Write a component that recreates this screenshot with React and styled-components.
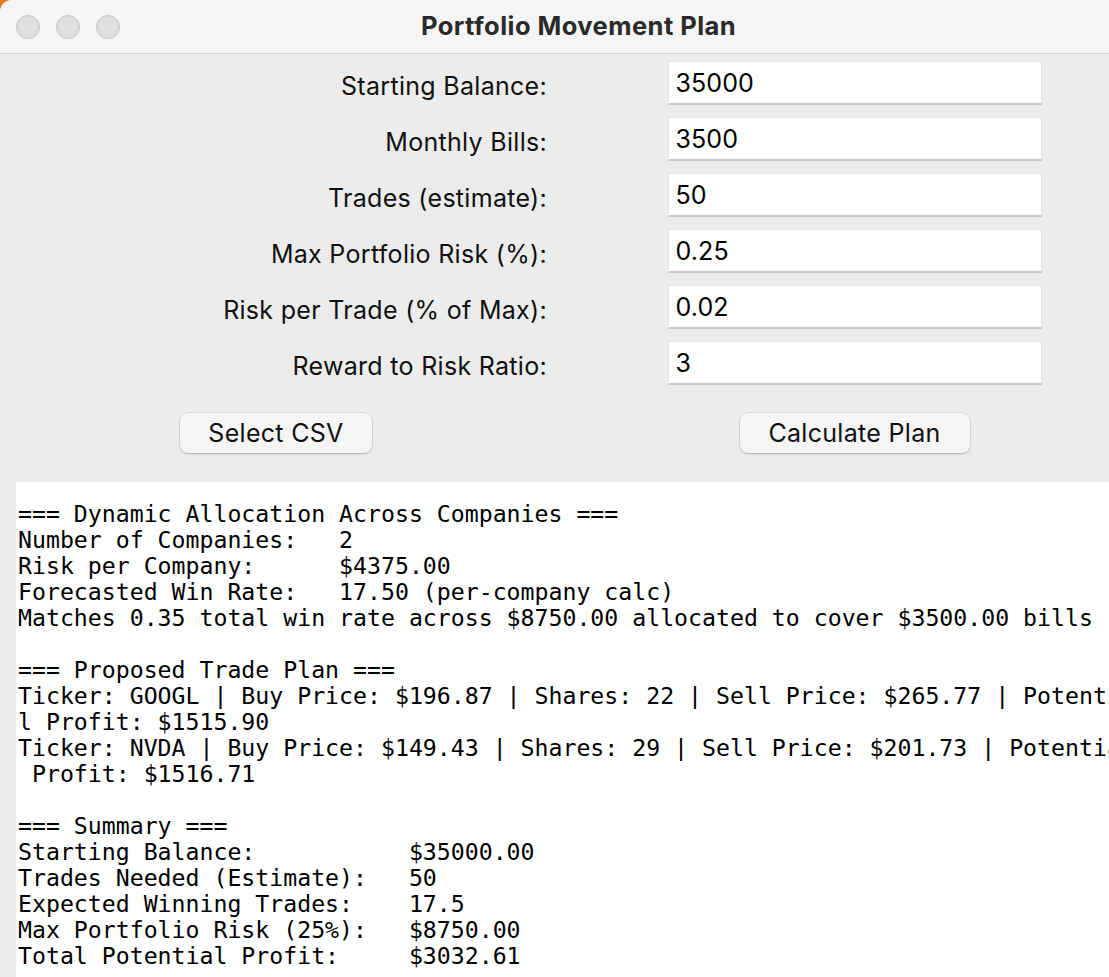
import React from "react";
import styled, { createGlobalStyle } from "styled-components";

const Global = createGlobalStyle`
  html, body {
    margin: 0;
    padding: 0;
    overflow: hidden;
    background: #e07b22;
  }
  #root { width: 1109px; height: 977px; overflow: hidden; }
`;

const Window = styled.div`
  width: 1157px;
  height: 977px;
  background: #ececec;
  border-top-left-radius: 12px;
  overflow: hidden;
  display: flex;
  flex-direction: column;
  font-family: Inter, "Liberation Sans", sans-serif;
  color: #000;
`;

const TitleBar = styled.div`
  height: 53px;
  flex: none;
  background: #f5f5f5;
  border-bottom: 1px solid #d6d6d6;
  display: grid;
  grid-template-columns: 1fr auto 1fr;
  align-items: center;
  padding: 0 16px;
`;

const Lights = styled.div`
  display: flex;
  gap: 16px;
  padding-top: 1px;
`;

const Light = styled.span`
  width: 22px;
  height: 22px;
  border-radius: 50%;
  background: #dedede;
  border: 1px solid #c4c4c4;
`;

const Title = styled.div`
  font-size: 25.5px;
  font-weight: 700;
  color: #2a2a2a;
  letter-spacing: 0.45px;
  padding-bottom: 2px;
`;

const Form = styled.div`
  display: grid;
  grid-template-columns: 552px 605px;
  grid-auto-rows: 44px;
  row-gap: 12px;
  padding-top: 7px;
  align-items: center;
`;

const Label = styled.label`
  justify-self: end;
  padding-right: 5px;
  padding-top: 5px;
  font-size: 25px;
  line-height: 30px;
  letter-spacing: 0.3px;
  color: #111;
`;

const Input = styled.input`
  justify-self: center;
  box-sizing: border-box;
  width: 374px;
  height: 44px;
  border: 1px solid #e2e2e2;
  border-bottom: 2px solid #c8c8c8;
  background: #fff;
  font-family: Inter, "Liberation Sans", sans-serif;
  font-size: 25px;
  letter-spacing: 0.1px;
  padding: 1px 7px 0;
  color: #000;
  outline: none;
`;

const ButtonRow = styled.div`
  display: grid;
  grid-template-columns: 552px 605px;
  padding-top: 28px;
  padding-bottom: 29px;
`;

const Button = styled.button`
  justify-self: center;
  width: ${(p) => p.$w}px;
  height: 40px;
  border: none;
  border-radius: 8px;
  background: #f5f5f5;
  box-shadow: 0 0 0 0.5px rgba(0, 0, 0, 0.12), 0 1px 2px rgba(0, 0, 0, 0.2);
  font-family: Inter, "Liberation Sans", sans-serif;
  font-size: 25px;
  letter-spacing: 0.3px;
  color: #111;
  padding: 0;
`;

const Output = styled.pre`
  flex: 1;
  margin: 0 0 0 16px;
  background: #fff;
  padding: 19px 2px 0 2px;
  font-family: "DejaVu Sans Mono", "Liberation Mono", monospace;
  font-size: 23.2px;
  line-height: 26px;
  white-space: pre;
  color: #000;
  overflow: hidden;
`;

const fields = [
  ["Starting Balance:", "35000"],
  ["Monthly Bills:", "3500"],
  ["Trades (estimate):", "50"],
  ["Max Portfolio Risk (%):", "0.25"],
  ["Risk per Trade (% of Max):", "0.02"],
  ["Reward to Risk Ratio:", "3"],
];

const lines = [
  "=== Dynamic Allocation Across Companies ===",
  "Number of Companies:   2",
  "Risk per Company:      $4375.00",
  "Forecasted Win Rate:   17.50 (per-company calc)",
  "Matches 0.35 total win rate across $8750.00 allocated to cover $3500.00 bills",
  "",
  "=== Proposed Trade Plan ===",
  "Ticker: GOOGL | Buy Price: $196.87 | Shares: 22 | Sell Price: $265.77 | Potentia",
  "l Profit: $1515.90",
  "Ticker: NVDA | Buy Price: $149.43 | Shares: 29 | Sell Price: $201.73 | Potential",
  " Profit: $1516.71",
  "",
  "=== Summary ===",
  "Starting Balance:           $35000.00",
  "Trades Needed (Estimate):   50",
  "Expected Winning Trades:    17.5",
  "Max Portfolio Risk (25%):   $8750.00",
  "Total Potential Profit:     $3032.61",
];

export default function App() {
  return (
    <>
      <Global />
      <Window>
        <TitleBar>
          <Lights>
            <Light />
            <Light />
            <Light />
          </Lights>
          <Title>Portfolio Movement Plan</Title>
          <span />
        </TitleBar>
        <Form>
          {fields.map(([label, value]) => (
            <React.Fragment key={label}>
              <Label>{label}</Label>
              <Input defaultValue={value} />
            </React.Fragment>
          ))}
        </Form>
        <ButtonRow>
          <Button $w={192}>Select CSV</Button>
          <Button $w={230}>Calculate Plan</Button>
        </ButtonRow>
        <Output>{lines.join("\n")}</Output>
      </Window>
    </>
  );
}
